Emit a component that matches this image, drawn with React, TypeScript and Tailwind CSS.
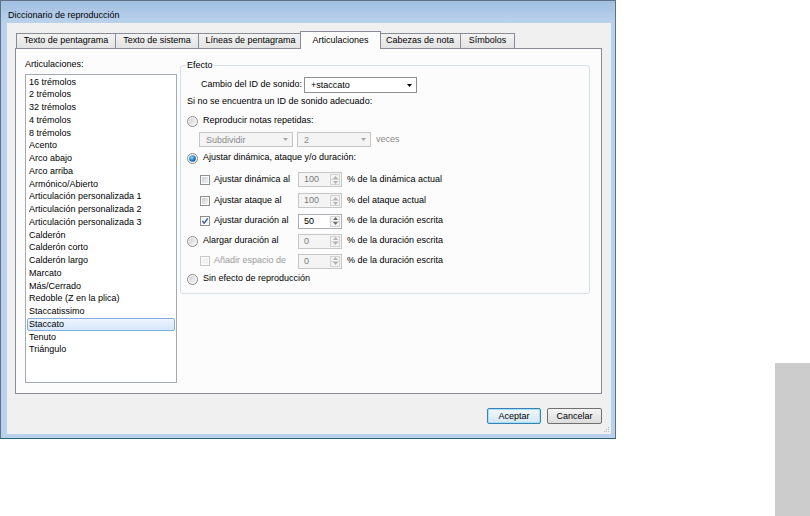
import React from "react";

const articulaciones = [
  "16 trémolos",
  "2 trémolos",
  "32 trémolos",
  "4 trémolos",
  "8 trémolos",
  "Acento",
  "Arco abajo",
  "Arco arriba",
  "Armónico/Abierto",
  "Articulación personalizada 1",
  "Articulación personalizada 2",
  "Articulación personalizada 3",
  "Calderón",
  "Calderón corto",
  "Calderón largo",
  "Marcato",
  "Más/Cerrado",
  "Redoble (Z en la plica)",
  "Staccatissimo",
  "Staccato",
  "Tenuto",
  "Triángulo",
];

const tabs = [
  { label: "Texto de pentagrama", cls: "w-[100px]" },
  { label: "Texto de sistema", cls: "w-[84px]" },
  { label: "Líneas de pentagrama", cls: "w-[105px]" },
  { label: "Articulaciones", cls: "w-[81px]", active: true },
  { label: "Cabezas de nota", cls: "w-[82px]" },
  { label: "Símbolos", cls: "w-[55px]" },
];

function Radio({ checked }: { checked?: boolean }) {
  return (
    <svg width="11" height="11" viewBox="0 0 11 11" className="shrink-0">
      <defs>
        <linearGradient id="radioFill" x1="0" y1="0" x2="1" y2="1">
          <stop offset="0" stopColor="#cfcfcf" />
          <stop offset="1" stopColor="#f6f6f6" />
        </linearGradient>
        <radialGradient id="radioDot" cx="0.4" cy="0.35" r="0.7">
          <stop offset="0" stopColor="#9adcff" />
          <stop offset="0.55" stopColor="#2a86cf" />
          <stop offset="1" stopColor="#144d86" />
        </radialGradient>
      </defs>
      <circle cx="5.5" cy="5.5" r="5" fill="#f5f5f5" stroke="#8e8f8f" />
      <circle cx="5.5" cy="5.5" r="3.3" fill={checked ? "url(#radioDot)" : "url(#radioFill)"} />
    </svg>
  );
}

function Check({ checked, disabled }: { checked?: boolean; disabled?: boolean }) {
  return (
    <svg width="10" height="10" viewBox="0 0 10 10" className="shrink-0">
      <defs>
        <linearGradient id="checkFill" x1="0" y1="0" x2="1" y2="1">
          <stop offset="0" stopColor="#c9ccd1" />
          <stop offset="1" stopColor="#f4f4f4" />
        </linearGradient>
      </defs>
      <rect x="0.5" y="0.5" width="9" height="9" fill="#fdfdfd" stroke={disabled ? "#c6c6c6" : "#8e8f8f"} />
      <rect x="2" y="2" width="6" height="6" fill={disabled ? "#f1f1f1" : checked ? "#eef2f7" : "url(#checkFill)"} />
      {checked && <path d="M2.4 5 L4.2 7.1 L7.8 2.4" stroke="#3d5a97" strokeWidth="1.4" fill="none" />}
    </svg>
  );
}

function Arrow({ up, color }: { up?: boolean; color: string }) {
  return (
    <svg width="5" height="3" viewBox="0 0 5 3">
      <path d={up ? "M0 3 L2.5 0 L5 3 Z" : "M0 0 L5 0 L2.5 3 Z"} fill={color} />
    </svg>
  );
}

function Spin({ value, enabled }: { value: string; enabled?: boolean }) {
  return (
    <div
      className={`flex h-[15px] w-[44px] shrink-0 border ${
        enabled ? "border-[#abadb3] bg-white text-black" : "border-[#c6c6c6] bg-[#f4f4f4] text-[#7a7a7a]"
      }`}
    >
      <div className="flex-1 pl-[5px] leading-[13px]">{value}</div>
      <div className="my-[1px] mr-[1px] flex w-[10px] flex-col border border-[#d3d3d3] bg-[#f3f3f3]">
        <div className="flex flex-1 items-center justify-center border-b border-[#d3d3d3]">
          <Arrow up color={enabled ? "#6b6b6b" : "#b0b0b0"} />
        </div>
        <div className="flex flex-1 items-center justify-center">
          <Arrow color={enabled ? "#6b6b6b" : "#b0b0b0"} />
        </div>
      </div>
    </div>
  );
}

function Combo({ value, cls, enabled }: { value: string; cls: string; enabled?: boolean }) {
  return (
    <div
      className={`flex items-center justify-between ${cls} ${
        enabled ? "border border-[#8e8f8f] bg-white text-black" : "border border-[#c6c6c6] bg-[#f4f4f4] text-[#8a8a8a]"
      }`}
    >
      <span className="pl-[6px] leading-[12px]">{value}</span>
      <span className="pr-[4px]">
        <Arrow color={enabled ? "#000000" : "#a6a6a6"} />
      </span>
    </div>
  );
}

export default function App() {
  return (
    <div className="flex h-[516px] w-[810px] bg-white font-['Liberation_Sans',Arial,sans-serif] text-[9px] text-black">
      {/* dialog window */}
      <div className="flex h-[439px] w-[616px] shrink-0 flex-col border border-[#5d7188] border-b-[#2b6573] bg-[#b9d1ea]">
        <div className="h-[22px] bg-gradient-to-b from-[#a2bfe1] to-[#bad2ec] pl-[7px] pt-[8px] leading-[12px]">
          Diccionario de reproducción
        </div>
        <div className="flex flex-1 pb-[4px] pl-[6px] pr-[4px]">
          <div className="relative flex w-[604px] flex-col bg-[#f0f0f0]">
            {/* tabs */}
            <div className="flex h-[25px] items-end pl-[9px]">
              {tabs.map((t) =>
                t.active ? (
                  <div
                    key={t.label}
                    className={`relative z-10 -mx-[2px] -mb-[1px] flex h-[18px] items-center justify-center border border-b-0 border-[#898c95] bg-[#fcfcfc] ${t.cls}`}
                  >
                    {t.label}
                  </div>
                ) : (
                  <div
                    key={t.label}
                    className={`-mr-[1px] flex h-[15px] items-center justify-center border border-b-0 border-[#898c95] bg-gradient-to-b from-[#f3f3f3] to-[#e3e3e3] ${t.cls}`}
                  >
                    {t.label}
                  </div>
                )
              )}
            </div>

            {/* tab page */}
            <div className="ml-[8px] flex h-[346px] w-[587px] border border-[#898c95] bg-[#fcfcfc]">
              <div className="flex flex-col pl-[9px] pt-[9px]">
                <div className="h-[12px] leading-[12px]">Articulaciones:</div>
                <div className="mt-[4px] h-[309px] w-[152px] border border-[#a5a9b1] bg-white px-[1px] pt-[1px]">
                  {articulaciones.map((a) =>
                    a === "Staccato" ? (
                      <div
                        key={a}
                        className="flex h-[12.75px] items-center rounded-[2px] border border-[#84acdd] bg-gradient-to-b from-[#eef5fd] to-[#d6e7fb] pl-[1px]"
                      >
                        {a}
                      </div>
                    ) : (
                      <div key={a} className="flex h-[12.75px] items-center pl-[2px]">
                        {a}
                      </div>
                    )
                  )}
                </div>
              </div>

              {/* Efecto group */}
              <div className="relative ml-[3px] mt-[16px] flex h-[229px] w-[410px] flex-col rounded-[3px] border border-[#d5dfe5] pl-[6px] pt-[11px]">
                <span className="absolute -top-[7px] left-[5px] bg-[#fcfcfc] px-[1px] leading-[12px]">Efecto</span>

                <div className="flex h-[16px] items-center pl-[14px]">
                  <span className="w-[103px]">Cambio del ID de sonido:</span>
                  <Combo value="+staccato" cls="h-[16px] w-[113px]" enabled />
                </div>

                <div className="flex h-[17px] items-center">Si no se encuentra un ID de sonido adecuado:</div>

                <div className="flex h-[22px] items-center">
                  <Radio />
                  <span className="ml-[5px]">Reproducir notas repetidas:</span>
                </div>

                <div className="flex h-[15px] items-center pl-[12px]">
                  <Combo value="Subdividir" cls="h-[15px] w-[94px]" />
                  <span className="ml-[4px]">
                    <Combo value="2" cls="h-[15px] w-[74px]" />
                  </span>
                  <span className="ml-[5px] text-[#8a8a8a]">veces</span>
                </div>

                <div className="flex h-[22px] items-center">
                  <Radio checked />
                  <span className="ml-[5px]">Ajustar dinámica, ataque y/o duración:</span>
                </div>

                <div className="flex h-[21px] items-center pl-[13px]">
                  <Check />
                  <span className="ml-[4px] w-[84px]">Ajustar dinámica al</span>
                  <Spin value="100" />
                  <span className="ml-[5px]">% de la dinámica actual</span>
                </div>

                <div className="flex h-[21px] items-center pl-[13px]">
                  <Check />
                  <span className="ml-[4px] w-[84px]">Ajustar ataque al</span>
                  <Spin value="100" />
                  <span className="ml-[5px]">% del ataque actual</span>
                </div>

                <div className="flex h-[20px] items-center pl-[13px]">
                  <Check checked />
                  <span className="ml-[4px] w-[84px]">Ajustar duración al</span>
                  <Spin value="50" enabled />
                  <span className="ml-[5px]">% de la duración escrita</span>
                </div>

                <div className="flex h-[20px] items-center">
                  <Radio />
                  <span className="ml-[5px] w-[95px]">Alargar duración al</span>
                  <Spin value="0" />
                  <span className="ml-[5px]">% de la duración escrita</span>
                </div>

                <div className="flex h-[20px] items-center pl-[13px]">
                  <Check disabled />
                  <span className="ml-[4px] w-[84px] text-[#9a9a9a]">Añadir espacio de</span>
                  <Spin value="0" />
                  <span className="ml-[5px]">% de la duración escrita</span>
                </div>

                <div className="flex h-[16px] items-center">
                  <Radio />
                  <span className="ml-[5px]">Sin efecto de reproducción</span>
                </div>
              </div>
            </div>

            {/* buttons */}
            <div className="mt-[14px] flex justify-end gap-[6px] pr-[9px]">
              <button className="h-[16px] w-[54px] rounded-[2px] border border-[#3c7fb1] bg-gradient-to-b from-[#f2f8fc] to-[#d6e6f2] leading-[12px] shadow-[inset_0_0_0_1px_#9ee2fb]">
                Aceptar
              </button>
              <button className="h-[16px] w-[55px] rounded-[2px] border border-[#707070] bg-gradient-to-b from-[#f4f4f4] to-[#dcdcdc] leading-[12px]">
                Cancelar
              </button>
            </div>

            <svg width="7" height="6" viewBox="0 0 7 6" className="absolute bottom-[1px] right-[1px]">
              <rect x="5" y="0" width="1" height="1" fill="#b8b8b8" />
              <rect x="3" y="2" width="1" height="1" fill="#b8b8b8" />
              <rect x="5" y="2" width="1" height="1" fill="#b8b8b8" />
              <rect x="1" y="4" width="1" height="1" fill="#b8b8b8" />
              <rect x="3" y="4" width="1" height="1" fill="#b8b8b8" />
              <rect x="5" y="4" width="1" height="1" fill="#b8b8b8" />
            </svg>
          </div>
        </div>
      </div>

      <div className="flex flex-1 flex-col items-end justify-end">
        <div className="h-[153px] w-[35px] bg-[#cccccc]" />
      </div>
    </div>
  );
}
